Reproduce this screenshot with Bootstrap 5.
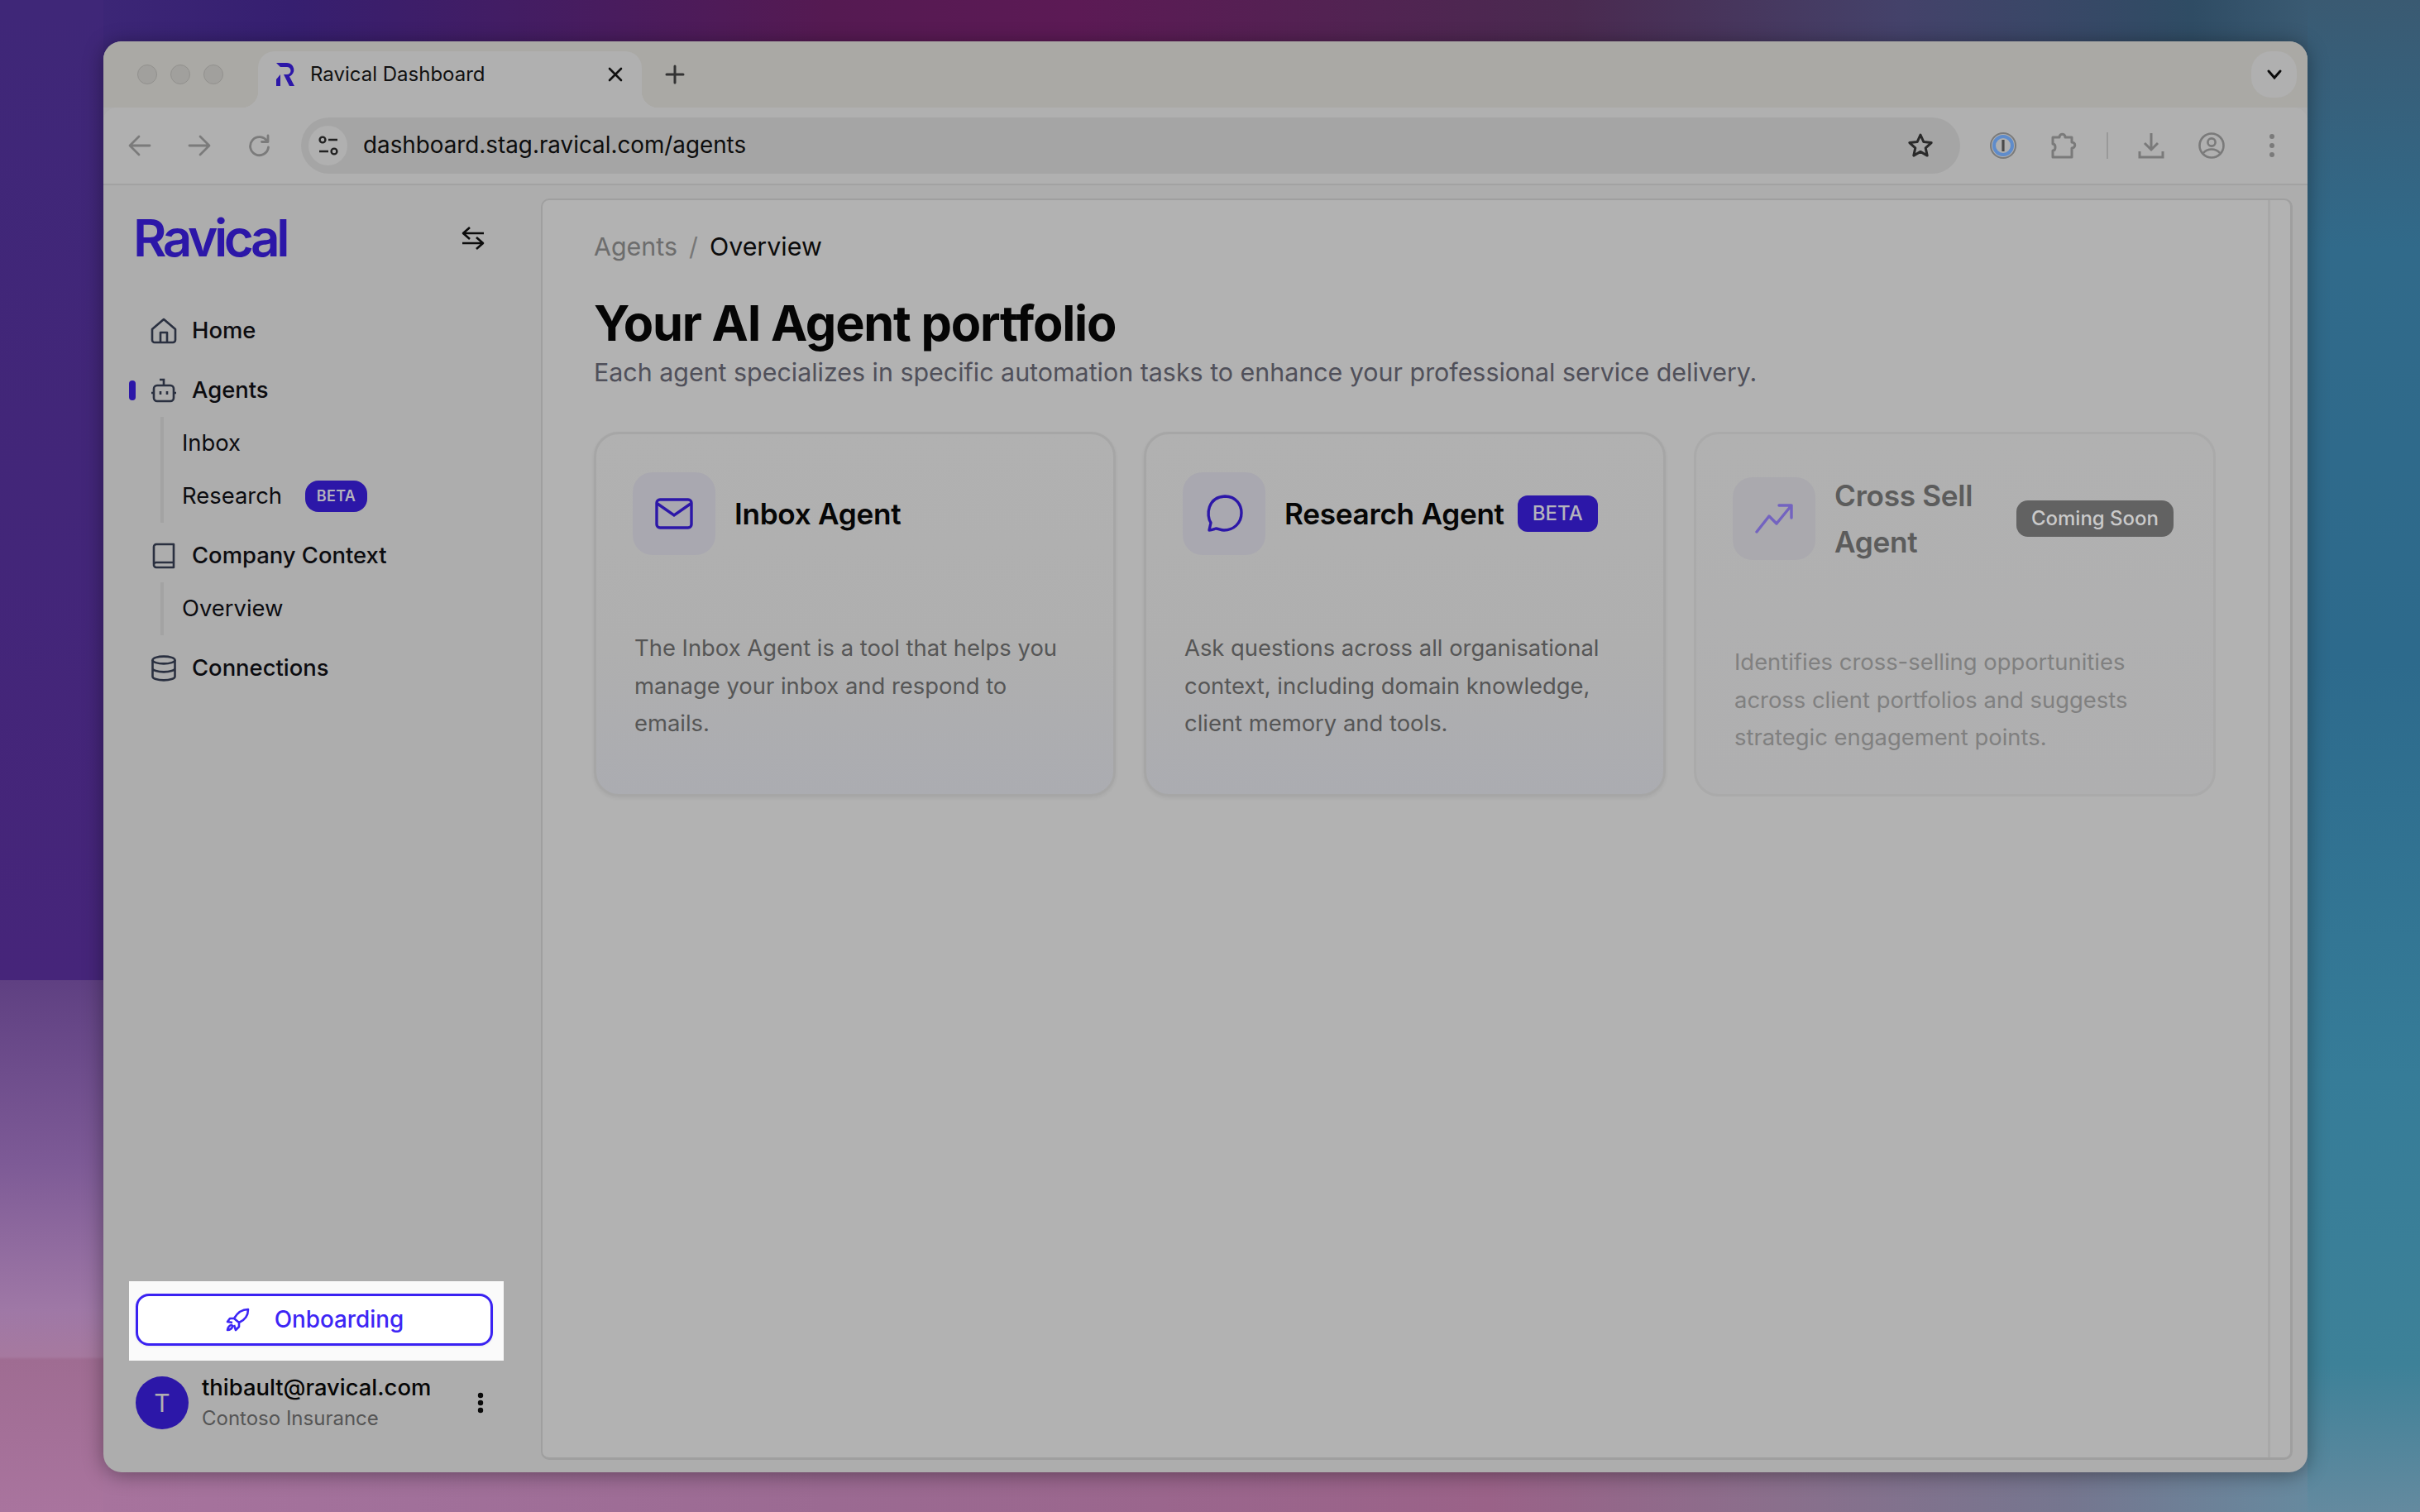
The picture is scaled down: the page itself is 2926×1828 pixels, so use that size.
<!DOCTYPE html>
<html lang="en">
<head>
<meta charset="UTF-8">
<title>Ravical Dashboard</title>
<link href="https://cdn.jsdelivr.net/npm/bootstrap@5.3.2/dist/css/bootstrap.min.css" rel="stylesheet">
<style>
html, body { height: 100%; }
body {
    font-family: Inter, "Liberation Sans", sans-serif;
    padding: 50px 136px 48px 125px;
    overflow: hidden;
    background:
        linear-gradient(180deg, #5f4082 0, #7d5a96 220px, #9f78a6 400px, #a6799f 455px, #9f6c92 459px, #a9749e 643px) 0 100% / 125px 643px no-repeat,
        linear-gradient(180deg, #3f2778 0, #46257a 1185px) 0 0 / 125px 100% no-repeat,
        linear-gradient(180deg, #3a5a72 0, #316a8a 300px, #2d6a8c 800px, #367c98 1300px, #3d8198 1650px, #648a9f 1828px) 100% 0 / 136px 100% no-repeat,
        linear-gradient(90deg, #a9749e 0, #a1709a 500px, #9b6a92 1000px, #9a6288 1800px, #8a6f8c 2150px, #75768f 2500px, #668a9f 2800px, #648a9f 2926px) 0 100% / 100% 70px no-repeat,
        linear-gradient(90deg, #3f2a7a 0, #361f70 350px, #551a52 1000px, #5c1a55 1300px, #4a2a50 1900px, #44426a 2300px, #2f4c64 2650px, #3a5a72 2790px) 0 0 / 100% 70px no-repeat;
}
.app-window {
    height: 1730px;
    border-radius: 22px;
    background: #adadad;
    box-shadow: 0 3px 24px rgba(0, 0, 0, .38);
    overflow: hidden;
}
.tab-strip { height: 80px; background: #aaa9a5; padding-top: 12px; padding-left: 41px; padding-right: 13px; }
.lights { width: 146px; gap: 16px; height: 56px; }
.lights span { width: 24px; height: 24px; border-radius: 50%; background: #a1a09d; border: 1px solid #92918e; }
.chrome-tab {
    position: relative;
    width: 464px;
    height: 68px;
    background: #b0b0b0;
    border-radius: 20px 20px 0 0;
    padding: 0 21px 12px;
    font-size: 24px;
    color: #111;
}
.chrome-tab::before, .chrome-tab::after {
    content: "";
    position: absolute;
    bottom: 0;
    width: 20px;
    height: 20px;
}
.chrome-tab::before { left: -20px; background: radial-gradient(circle at 0 0, transparent 20px, #b0b0b0 20.5px); }
.chrome-tab::after { right: -20px; background: radial-gradient(circle at 100% 0, transparent 20px, #b0b0b0 20.5px); }
.tab-title { margin-left: 18px; white-space: nowrap; }
.tab-close { margin-left: auto; width: 22px; height: 22px; }
.tab-new { margin-left: 12px; }
.tab-more { width: 55px; height: 56px; border-radius: 24px; background: #b0b0b0; }
.tool-bar { height: 94px; background: #b0b0b0; border-bottom: 2px solid #a2a2a2; padding: 0 20px 0 30px; border-radius: 16px 16px 0 0; }
.tool-bar svg { flex: none; }
.nav-arrows { gap: 44px; width: 209px; flex: none; }
.url-pill { width: 2006px; flex: none; height: 68px; background: #a5a5a5; border-radius: 34px; padding: 0 32px 0 9px; font-size: 27.8px; color: #0d0d0d; }
.site-info { width: 47px; height: 48px; border-radius: 50%; background: #b0b0b0; margin-right: 19px; }
.ext-icons { margin-left: 36px; gap: 41px; }
.ext-sep { width: 2px; height: 32px; background: #999; margin: 0 -5px; }
.app-body { height: 1556px; }
.side-bar { width: 529px; padding: 0 0 47px 31px; flex: none; }
.brand-row { height: 88px; margin-top: 20px; padding-left: 5px; padding-right: 68px; }
.brand-mark { font-size: 62px; font-weight: 600; letter-spacing: -4.4px; color: #2c17a8; line-height: 1; }
.side-nav { margin-top: 28px; font-size: 27.4px; color: #0c0c10; }
.nav-main { position: relative; height: 64px; margin-top: 8px; padding-left: 26px; gap: 18px; font-weight: 500; }
.nav-main svg { flex: none; }
.nav-active::before { content: ""; position: absolute; left: 0; top: 20px; width: 8px; height: 24px; border-radius: 4px; background: #2c17a8; }
.nav-sub { margin-left: 38px; padding-left: 22px; border-left: 4px solid #a3a3a3; }
.nav-sub > div { height: 64px; }
.nav-sub-beta { margin-left: 28px; font-size: 18px; font-weight: 600; width: 75px; height: 38px; border-radius: 16px; padding: 0; letter-spacing: .3px; }
.beta-tag { background: #2c17a8; color: #b4b4bc; }
.onboard-box { background: #fafafa; padding: 15px 13px 18px 8px; width: 453px; }
.onboard-btn {
    width: 432px; height: 63px; background: #fff; border: 3px solid #3a22f2; border-radius: 16px;
    color: #3d26f5; font-size: 27.8px; font-weight: 500; gap: 30px; padding: 0;
    box-shadow: 0 1px 3px rgba(0, 0, 0, .08);
}
.onboard-btn:hover { background: #fff; color: #3d26f5; border-color: #3a22f2; }
.user-row { padding-left: 8px; margin-top: 14px; padding-right: 69px; }
.user-avatar { width: 64px; height: 64px; background: #2c17a8; color: #b0b0b0; font-size: 30px; }
.user-mail { font-size: 27.4px; font-weight: 500; color: #060606; line-height: 37px; }
.user-org { font-size: 24px; color: #555; line-height: 37px; }
.main-panel {
    position: relative;
    width: 2118px;
    height: 1525px;
    margin: 16px 0 0 0;
    background: #b2b2b2;
    border-radius: 10px;
    border: 2px solid #9f9f9f;
    border-right-width: 3px;
    border-bottom-width: 3px;
    padding: 34px 0 0 62px;
}
.scroll-rail { position: absolute; top: 0; bottom: 0; right: 24px; width: 3px; background: #a8a8a8; }
.crumbs { font-size: 30.4px; margin: 0; line-height: 44px; --bs-breadcrumb-divider-color: #777; --bs-breadcrumb-item-padding-x: 14px; }
.crumbs .breadcrumb-item { color: #6d6d6d; }
.crumbs .breadcrumb-item.active { color: #0c0c0c; }
.page-title { font-size: 59.4px; font-weight: 700; letter-spacing: -1.2px; line-height: 72px; margin: 34px 0 0 0; color: #050505; }
.page-sub { font-size: 30.4px; color: #50505a; line-height: 40px; margin: 4px 0 0 0; }
.agent-grid { display: grid; grid-template-columns: repeat(3, 631px); gap: 34px; margin-top: 52px; }
.agent-card {
    height: 441px;
    background: linear-gradient(180deg, #b1b1b1 0, #afafaf 60%, #abacb1 100%);
    border: 3px solid #a6a6a6;
    border-radius: 30px;
    box-shadow: 0 2px 4px rgba(0, 0, 0, .06);
}
.agent-card .card-body { padding: 46px 24px 0 47px; }
.agent-head { height: 100px; }
.agent-ico { width: 100px; height: 100px; border-radius: 24px; background: #a9a8b0; flex: none; margin-left: -3px; }
.agent-name { font-size: 35.2px; font-weight: 600; color: #060606; margin: 0 0 0 23px; line-height: 56px; letter-spacing: -.3px; }
.agent-tag { font-size: 24px; font-weight: 500; border-radius: 12px; padding: 0; height: 44px; width: 97px; margin-left: 16px; }
.agent-text { font-size: 27.4px; color: #565656; line-height: 45.5px; margin: 90px 0 0 -1px; max-width: 530px; }
.card-soon { border-color: #aaaaaa; background: linear-gradient(180deg, #b1b1b1 0, #afafb0 100%); box-shadow: none; }
.card-soon .agent-head { height: 112px; }
.card-soon .agent-ico { background: #aaa9ae; }
.card-soon .agent-name { color: #5c5c5c; width: 200px; }
.soon-tag { background: #626262; color: #cacaca; font-size: 24px; font-weight: 500; border-radius: 14px; padding: 0; height: 44px; width: 190px; margin-left: auto; margin-right: 24px; }
.card-soon .agent-text { color: #808080; margin-top: 95px; }
</style>
</head>
<body>

<div class="app-window d-flex flex-column">
    <!-- browser tabs -->
    <div class="tab-strip d-flex align-items-start">
        <div class="lights d-flex align-items-center"><span></span><span></span><span></span></div>
        <div class="chrome-tab d-flex align-items-center">
            <svg width="24" height="30" viewBox="0 0 24 30"><path d="M1 1h13a8.5 8.5 0 0 1 3 16.4L23 29h-6L10 15h4a3 3 0 0 0 0-9H6z" fill="#2c17a8"/><path d="M1 21l5-6v14H1z" fill="#2c17a8"/></svg>
            <span class="tab-title">Ravical Dashboard</span>
            <svg class="tab-close" viewBox="0 0 22 22"><path d="M4 4l14 14M18 4L4 18" stroke="#111" stroke-width="2.6" stroke-linecap="round"/></svg>
        </div>
        <svg class="tab-new" width="56" height="56" viewBox="0 0 56 56"><path d="M28 18v20M18 28h20" stroke="#333" stroke-width="3" stroke-linecap="round"/></svg>
        <div class="tab-more ms-auto d-flex align-items-center justify-content-center">
            <svg width="20" height="14" viewBox="0 0 20 14"><path d="M3 3l7 8 7-8" fill="none" stroke="#0c0c0c" stroke-width="3" stroke-linecap="round"/></svg>
        </div>
    </div>

    <!-- browser toolbar -->
    <div class="tool-bar d-flex align-items-center">
        <div class="nav-arrows d-flex align-items-center">
            <svg width="28" height="28" viewBox="0 0 28 28"><path d="M26 14H3M13 3L2 14l11 11" fill="none" stroke="#7b7b7b" stroke-width="2.8" stroke-linecap="round" stroke-linejoin="round"/></svg>
            <svg width="28" height="28" viewBox="0 0 28 28"><path d="M2 14h23M15 3l11 11-11 11" fill="none" stroke="#7b7b7b" stroke-width="2.8" stroke-linecap="round" stroke-linejoin="round"/></svg>
            <svg width="28" height="28" viewBox="0 0 28 28"><path d="M24 9a11 11 0 1 0 1.5 7M25 2v7.5h-7.5" fill="none" stroke="#7b7b7b" stroke-width="2.8" stroke-linecap="round" stroke-linejoin="round"/></svg>
        </div>
        <div class="url-pill d-flex align-items-center">
            <div class="site-info d-flex align-items-center justify-content-center">
                <svg width="26" height="26" viewBox="0 0 26 26"><circle cx="6" cy="6" r="3.4" fill="none" stroke="#222" stroke-width="2.4"/><path d="M13 6h11M2 20h11" stroke="#222" stroke-width="2.6"/><circle cx="20" cy="20" r="3.4" fill="none" stroke="#222" stroke-width="2.4"/></svg>
            </div>
            <span>dashboard.stag.ravical.com/agents</span>
            <svg class="ms-auto" width="32" height="32" viewBox="0 0 32 32"><path d="M16 3l3.9 8.6 9.3 1-7 6.3 2 9.2-8.2-4.7-8.2 4.7 2-9.2-7-6.3 9.3-1z" fill="none" stroke="#2a2a2a" stroke-width="3" stroke-linejoin="round"/></svg>
        </div>
        <div class="ext-icons d-flex align-items-center">
            <svg width="32" height="32" viewBox="0 0 32 32"><circle cx="16" cy="16" r="15" fill="none" stroke="#7a7a7a" stroke-width="2"/><circle cx="16" cy="16" r="11" fill="none" stroke="#5f8ccb" stroke-width="4"/><rect x="14.4" y="9" width="3.2" height="14" fill="#4a4a4a"/></svg>
            <svg width="32" height="32" viewBox="0 0 32 32"><path d="M3 6h8c0-5 7-5 7 0h8v6c5 0 5 7 0 7v11H3v-8c4 0 4-8 0-8z" fill="none" stroke="#7a7a7a" stroke-width="3" stroke-linejoin="round"/></svg>
            <div class="ext-sep"></div>
            <svg width="32" height="32" viewBox="0 0 32 32"><path d="M16 1v20M8 13l8 8 8-8M2 23v7h28v-7" fill="none" stroke="#7a7a7a" stroke-width="3"/></svg>
            <svg width="32" height="32" viewBox="0 0 32 32"><circle cx="16" cy="16" r="14.5" fill="none" stroke="#7a7a7a" stroke-width="2.6"/><circle cx="16" cy="12" r="4.6" fill="none" stroke="#7a7a7a" stroke-width="2.6"/><path d="M6 25c5-6 15-6 20 0" fill="none" stroke="#7a7a7a" stroke-width="2.6"/></svg>
            <svg width="32" height="32" viewBox="0 0 32 32"><circle cx="16" cy="5" r="3" fill="#7a7a7a"/><circle cx="16" cy="16" r="3" fill="#7a7a7a"/><circle cx="16" cy="27" r="3" fill="#7a7a7a"/></svg>
        </div>
    </div>

    <div class="app-body d-flex">
        <!-- sidebar -->
        <aside class="side-bar d-flex flex-column">
            <div class="brand-row d-flex align-items-center justify-content-between">
                <span class="brand-mark">Ravical</span>
                <svg width="28" height="28" viewBox="0 0 28 28"><path d="M27 8H3M10 1L2 8l8 7M1 20h24M18 13l8 7-8 7" fill="none" stroke="#0c0c0c" stroke-width="2.6" stroke-linejoin="round"/></svg>
            </div>
            <nav class="side-nav nav flex-column flex-nowrap">
                <div class="nav-main d-flex align-items-center">
                    <svg width="32" height="32" viewBox="0 0 32 32"><path d="M2 14L16 2l14 12v13a3 3 0 0 1-3 3H5a3 3 0 0 1-3-3zM12 30V18h8v12" fill="none" stroke="#2a3040" stroke-width="2.6" stroke-linejoin="round"/></svg>
                    <span>Home</span>
                </div>
                <div class="nav-main nav-active d-flex align-items-center">
                    <svg width="32" height="32" viewBox="0 0 32 32"><rect x="4" y="10" width="24" height="19" rx="4" fill="none" stroke="#2a3040" stroke-width="2.6"/><path d="M16 10V3h-5M1 19h3M28 19h3M12 17v4M20 17v4" fill="none" stroke="#2a3040" stroke-width="2.6"/></svg>
                    <span>Agents</span>
                </div>
                <div class="nav-sub">
                    <div class="d-flex align-items-center">Inbox</div>
                    <div class="d-flex align-items-center">Research <span class="badge beta-tag nav-sub-beta d-inline-flex align-items-center justify-content-center">BETA</span></div>
                </div>
                <div class="nav-main d-flex align-items-center">
                    <svg width="32" height="32" viewBox="0 0 32 32"><path d="M4 26V5a3 3 0 0 1 3-3h21v28H7a3 3 0 0 1-3-3.5A3 3 0 0 1 7 24h21" fill="none" stroke="#2a3040" stroke-width="2.6" stroke-linejoin="round"/></svg>
                    <span>Company Context</span>
                </div>
                <div class="nav-sub">
                    <div class="d-flex align-items-center">Overview</div>
                </div>
                <div class="nav-main d-flex align-items-center">
                    <svg width="32" height="32" viewBox="0 0 32 32"><ellipse cx="16" cy="6" rx="13.5" ry="4.4" fill="none" stroke="#2a3040" stroke-width="2.6"/><path d="M2.500 6v20c0 2.400 6 4.400 13.500 4.400s13.500-2 13.500-4.400V6M2.500 16c0 2.400 6 4.400 13.500 4.400s13.500-2 13.500-4.400" fill="none" stroke="#2a3040" stroke-width="2.6"/></svg>
                    <span>Connections</span>
                </div>
            </nav>
            <div class="mt-auto">
                <div class="onboard-box">
                    <button type="button" class="btn onboard-btn d-flex align-items-center justify-content-center">
                        <svg width="30" height="30" viewBox="0 0 30 30"><path d="M28 2c-8 0-13 4-17 11l6 5c7-3 11-8 11-16zM11 13H6l-3 4 6 1M17 18v5l-4 4-2-6M8 21c-2 0-5 3-5 6 3 0 6-2 6-5z" fill="none" stroke="#3d26f5" stroke-width="2.6" stroke-linejoin="round"/></svg>
                        <span>Onboarding</span>
                    </button>
                </div>
                <div class="user-row d-flex align-items-center">
                    <div class="user-avatar rounded-circle d-flex align-items-center justify-content-center flex-shrink-0">T</div>
                    <div class="ms-3 flex-grow-1">
                        <div class="user-mail">thibault@ravical.com</div>
                        <div class="user-org">Contoso Insurance</div>
                    </div>
                    <svg width="8" height="26" viewBox="0 0 8 26"><circle cx="4" cy="4" r="3.2" fill="#0a0a0a"/><circle cx="4" cy="13" r="3.2" fill="#0a0a0a"/><circle cx="4" cy="22" r="3.2" fill="#0a0a0a"/></svg>
                </div>
            </div>
        </aside>

        <!-- main panel -->
        <main class="main-panel">
            <div class="scroll-rail"></div>
            <ol class="breadcrumb crumbs">
                <li class="breadcrumb-item">Agents</li>
                <li class="breadcrumb-item active">Overview</li>
            </ol>
            <h1 class="page-title">Your AI Agent portfolio</h1>
            <p class="page-sub">Each agent specializes in specific automation tasks to enhance your professional service delivery.</p>

            <div class="agent-grid">
                <div class="card agent-card">
                    <div class="card-body">
                        <div class="agent-head d-flex align-items-center">
                            <div class="agent-ico d-flex align-items-center justify-content-center">
                                <svg width="46" height="38" viewBox="0 0 46 38"><rect x="2" y="2" width="42" height="34" rx="4" fill="none" stroke="#2c17a8" stroke-width="3.4"/><path d="M3 7l20 14L43 7" fill="none" stroke="#2c17a8" stroke-width="3.4"/></svg>
                            </div>
                            <h5 class="agent-name">Inbox Agent</h5>
                        </div>
                        <p class="agent-text">The Inbox Agent is a tool that helps you manage your inbox and respond to emails.</p>
                    </div>
                </div>
                <div class="card agent-card">
                    <div class="card-body">
                        <div class="agent-head d-flex align-items-center">
                            <div class="agent-ico d-flex align-items-center justify-content-center">
                                <svg width="46" height="46" viewBox="0 0 46 46"><path d="M5 43l2-9C1 25 3 3 24 2c14 0 20 11 20 20 0 13-10 21-21 21-4 0-7-2-10-2-3 1-5 2-8 2z" fill="none" stroke="#2c17a8" stroke-width="3.4" stroke-linejoin="round"/></svg>
                            </div>
                            <h5 class="agent-name">Research Agent</h5>
                            <span class="badge beta-tag agent-tag d-inline-flex align-items-center justify-content-center">BETA</span>
                        </div>
                        <p class="agent-text">Ask questions across all organisational context, including domain knowledge, client memory and tools.</p>
                    </div>
                </div>
                <div class="card agent-card card-soon">
                    <div class="card-body">
                        <div class="agent-head d-flex align-items-center">
                            <div class="agent-ico d-flex align-items-center justify-content-center">
                                <svg width="46" height="38" viewBox="0 0 46 38"><path d="M2 35l15-19 9 9L44 3M29 3h15v15" fill="none" stroke="#7363c0" stroke-width="3.4" stroke-linecap="round" stroke-linejoin="round"/></svg>
                            </div>
                            <h5 class="agent-name">Cross Sell Agent</h5>
                            <span class="badge soon-tag d-inline-flex align-items-center justify-content-center">Coming Soon</span>
                        </div>
                        <p class="agent-text">Identifies cross-selling opportunities across client portfolios and suggests strategic engagement points.</p>
                    </div>
                </div>
            </div>
        </main>
    </div>
</div>

</body>
</html>
